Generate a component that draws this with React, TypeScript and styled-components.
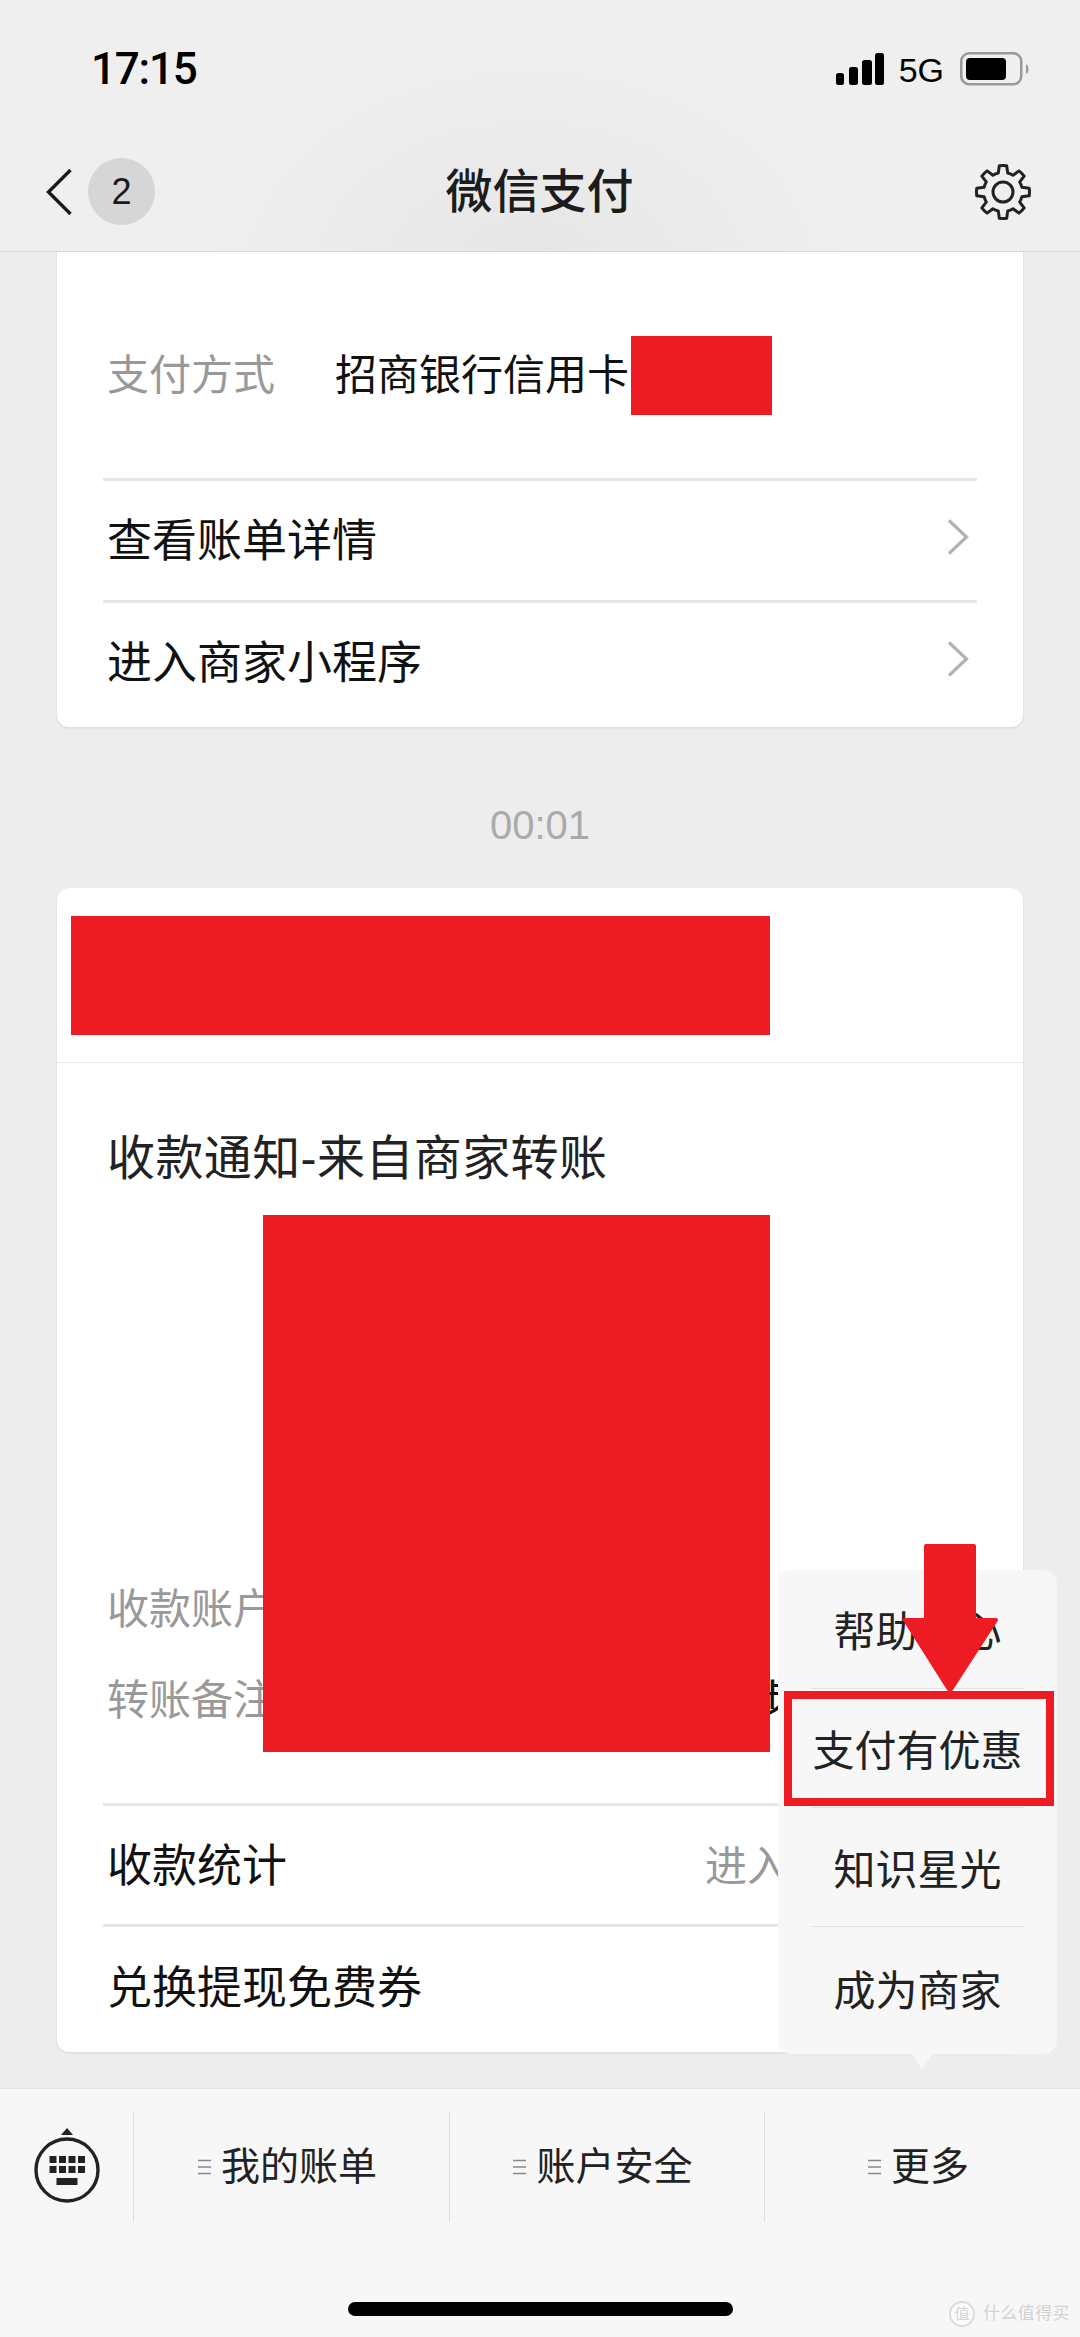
import React from 'react';
import styled, { createGlobalStyle } from 'styled-components';

const RED = '#ed1c24';

const GlobalStyle = createGlobalStyle`
  html, body {
    margin: 0;
    padding: 0;
    background: #ededed;
    font-family: 'Liberation Sans', 'Noto Sans CJK SC', sans-serif;
  }
  * {
    box-sizing: border-box;
  }
`;

const Page = styled.div`
  position: relative;
  display: flex;
  flex-direction: column;
  width: 1080px;
  height: 2337px;
  overflow: hidden;
  background: #ededed;
`;

const Header = styled.header`
  flex: none;
  height: 252px;
  background: radial-gradient(ellipse 330px 230px at 530px 270px, #e6e6e6, #efefef);
  border-bottom: 1px solid #d8d8d8;
`;

const StatusBar = styled.div`
  display: flex;
  align-items: center;
  justify-content: space-between;
  height: 132px;
  padding: 6px 50px 0 91px;
`;

const Clock = styled.span`
  font-family: Roboto, 'Liberation Sans', sans-serif;
  font-size: 44px;
  font-weight: 500;
  letter-spacing: -1.2px;
  color: #000;
`;

const StatusIcons = styled.div`
  display: flex;
  align-items: center;
`;

const NetworkLabel = styled.span`
  margin: 2px 16px 0 15px;
  font-size: 34px;
  line-height: 40px;
  color: #000;
`;

const NavBar = styled.nav`
  display: flex;
  align-items: center;
  justify-content: space-between;
  height: 119px;
  padding: 0 47px 0 46px;
`;

const NavLeft = styled.div`
  display: flex;
  align-items: center;
  gap: 16px;
  width: 150px;
`;

const CountBadge = styled.span`
  display: flex;
  align-items: center;
  justify-content: center;
  width: 67px;
  height: 67px;
  border-radius: 50%;
  background: #d6d6d6;
  font-size: 36px;
  color: #1a1a1a;
`;

const NavTitle = styled.h1`
  margin: 0;
  font-size: 47px;
  font-weight: 500;
  line-height: 60px;
  color: #1c1c1c;
`;

const NavRight = styled.div`
  display: flex;
  justify-content: flex-end;
  width: 150px;
`;

const Feed = styled.main`
  flex: 1;
  min-height: 0;
  padding: 0 57px;
  overflow: hidden;
`;

const Card = styled.section`
  border-radius: 0 0 12px 12px;
  background: #fff;
  box-shadow: 0 1px 3px rgba(0, 0, 0, 0.1);
`;

const RoundCard = styled(Card)`
  position: relative;
  border-radius: 12px;
`;

const PayRow = styled.div`
  display: flex;
  align-items: center;
  padding: 84px 50px 63px;
  font-size: 42px;
  line-height: 50px;
`;

const Muted = styled.span`
  flex: none;
  width: 228px;
  color: #999;
`;

const Value = styled.span`
  color: #111;
`;

const InlineCensor = styled.span`
  flex: none;
  width: 141px;
  height: 79px;
  margin-left: 2px;
  background: ${RED};
`;

const LinkRow = styled.div<{ $height: number; $last?: boolean }>`
  display: flex;
  align-items: center;
  justify-content: space-between;
  height: ${p => p.$height}px;
  margin: 0 46px;
  padding: 3px 8px ${p => (p.$last ? 5 : 0)}px 4px;
  border-top: 3px solid #e6e6e6;
  font-size: 45px;
  line-height: 56px;
  color: #111;

  svg {
    margin-top: -10px;
  }
`;

const RowEnd = styled.span`
  margin-right: 180px;
  font-size: 42px;
  color: #999;
`;

const TimeLabel = styled.div`
  margin: 78px 0 43px;
  font-size: 40px;
  line-height: 40px;
  text-align: center;
  color: #aaa;
`;

const CardTop = styled.div`
  height: 175px;
  padding: 28px 253px 0 14px;
  border-bottom: 1px solid #e9e9e9;
`;

const TopCensor = styled.div`
  height: 119px;
  background: ${RED};
`;

const Details = styled.div`
  display: flex;
  flex-direction: column;
  height: 740px;
  padding: 66px 50px 0;
`;

const NoticeTitle = styled.h2`
  margin: 0 0 391px;
  font-size: 48px;
  font-weight: 400;
  line-height: 60px;
  letter-spacing: 0.4px;
  color: #222;
`;

const InfoRow = styled.div`
  display: flex;
  height: 60px;
  margin-bottom: 31px;
  font-size: 42px;
  line-height: 60px;
`;

const ClippedTail = styled.span`
  margin-left: 416px;
  color: #111;
`;

const BlockCensor = styled.div`
  position: absolute;
  top: 327px;
  left: 206px;
  width: 507px;
  height: 537px;
  background: ${RED};
`;

const BottomBar = styled.footer`
  position: relative;
  flex: none;
  height: 249px;
  padding-top: 22px;
  background: #f7f7f7;
  border-top: 1px solid #e4e4e4;
`;

const MenuRow = styled.div`
  display: grid;
  grid-template-columns: 133px 316px 315px 316px;
  height: 111px;
`;

const KeyboardSlot = styled.div`
  display: flex;
  align-items: flex-start;
  justify-content: center;
  padding-top: 16px;
`;

const MenuItem = styled.div`
  display: flex;
  align-items: center;
  justify-content: center;
  gap: 10px;
  padding-right: 8px;
  border-left: 1px solid #dedede;
  font-size: 39px;
  line-height: 50px;
  color: #222;
`;

const HomeIndicator = styled.div`
  width: 385px;
  height: 14px;
  margin: 80px auto 0 348px;
  border-radius: 7px;
  background: #000;
`;

const Watermark = styled.div`
  position: absolute;
  right: 10px;
  bottom: 10px;
  display: flex;
  align-items: center;
  gap: 8px;
  font-size: 17px;
  line-height: 26px;
  letter-spacing: 0.4px;
  color: #d2d2d2;
`;

const WatermarkSeal = styled.span`
  display: flex;
  align-items: center;
  justify-content: center;
  width: 26px;
  height: 26px;
  border: 2px solid #dcdcdc;
  border-radius: 50%;
  background: #fbfbfb;
  font-size: 15px;
  letter-spacing: 0;
`;

const Popup = styled.div`
  position: absolute;
  top: 1570px;
  left: 778px;
  width: 279px;
  height: 484px;
  border-radius: 14px;
  background: #f7f7f7;

  &::after {
    content: '';
    position: absolute;
    top: 100%;
    left: 134px;
    border-top: 16px solid #f7f7f7;
    border-left: 10px solid transparent;
    border-right: 10px solid transparent;
  }
`;

const PopupItem = styled.div<{ $last?: boolean }>`
  display: flex;
  align-items: center;
  justify-content: center;
  height: ${p => (p.$last ? 127 : 119)}px;
  margin: 0 33px;
  padding-top: ${p => (p.$last ? 2 : 8)}px;
  border-bottom: ${p => (p.$last ? 'none' : '1px solid #e3e3e3')};
  font-size: 42px;
  line-height: 50px;
  white-space: nowrap;
  color: #222;
`;

const HighlightBox = styled.div`
  position: absolute;
  top: 1691px;
  left: 784px;
  width: 270px;
  height: 115px;
  border: 8px solid ${RED};
`;

const ArrowMark = styled.svg`
  position: absolute;
  top: 1544px;
  left: 903px;
`;

const gearPath = () => {
  const cx = 30;
  const cy = 30;
  const pt = (deg: number, r: number) => {
    const a = (deg * Math.PI) / 180;
    return `${(cx + r * Math.cos(a)).toFixed(2)} ${(cy + r * Math.sin(a)).toFixed(2)}`;
  };
  const parts: string[] = [];
  for (let i = 0; i < 8; i++) {
    const a = i * 45 - 90;
    parts.push(`${i === 0 ? 'M' : 'A19.5 19.5 0 0 1'} ${pt(a - 14, 19.5)}`);
    parts.push(`L ${pt(a - 8, 26.5)}`);
    parts.push(`A26.5 26.5 0 0 1 ${pt(a + 8, 26.5)}`);
    parts.push(`L ${pt(a + 14, 19.5)}`);
  }
  parts.push(`A19.5 19.5 0 0 1 ${pt(-104, 19.5)} Z`);
  return parts.join(' ');
};

const GearIcon = () => (
  <svg width='60' height='60' viewBox='0 0 60 60' fill='none' stroke='#222' strokeWidth='3' strokeLinejoin='round'>
    <path d={gearPath()} />
    <circle cx='30' cy='30' r='10' />
  </svg>
);

const SignalIcon = () => (
  <svg width='48' height='32' viewBox='0 0 48 32' fill='#000'>
    <rect x='0' y='20' width='8' height='12' rx='2.5' />
    <rect x='13' y='14' width='9' height='18' rx='2.5' />
    <rect x='26' y='7' width='10' height='25' rx='2.5' />
    <rect x='39' y='0' width='9' height='32' rx='2.5' />
  </svg>
);

const BatteryIcon = () => (
  <svg width='70' height='34' viewBox='0 0 70 34' fill='none'>
    <rect x='1.25' y='1.25' width='60' height='31' rx='8' stroke='#999' strokeWidth='2.5' />
    <rect x='6' y='6' width='40' height='22' rx='4' fill='#000' />
    <path d='M66 12 C69 13 69.5 21 66 22 Z' fill='#999' />
  </svg>
);

const BackIcon = () => (
  <svg width='26' height='46' viewBox='0 0 26 46' fill='none' stroke='#1a1a1a' strokeWidth='3.4'>
    <path d='M24.5 1 L2.5 23 L24.5 45' />
  </svg>
);

const ChevronIcon = () => (
  <svg width='22' height='36' viewBox='0 0 22 36' fill='none' stroke='#b2b2b2' strokeWidth='3.2'>
    <path d='M2 1.5 L19.5 18 L2 34.5' />
  </svg>
);

const MenuLines = () => (
  <svg width='13' height='16' viewBox='0 0 13 16' stroke='#888' strokeWidth='1.6'>
    <path d='M0 1.5 H13 M0 8 H13 M0 14.5 H13' />
  </svg>
);

const KeyboardIcon = () => {
  const keys = [0, 1].flatMap(row =>
    [0, 1, 2, 3].map(col => (
      <rect key={`${row}-${col}`} x={17.5 + col * 9.5} y={29 + row * 10} width='7' height='7' />
    ))
  );
  return (
    <svg width='70' height='76' viewBox='0 0 70 76' fill='#222'>
      <path d='M29 8 L35 1 L41 8 Z' />
      <circle cx='35' cy='43' r='31' fill='none' stroke='#222' strokeWidth='3.4' />
      {keys}
      <rect x='24.5' y='51' width='21' height='7' />
    </svg>
  );
};

const App = () => (
  <Page>
    <GlobalStyle />
    <Header>
      <StatusBar>
        <Clock>17:15</Clock>
        <StatusIcons>
          <SignalIcon />
          <NetworkLabel>5G</NetworkLabel>
          <BatteryIcon />
        </StatusIcons>
      </StatusBar>
      <NavBar>
        <NavLeft>
          <BackIcon />
          <CountBadge>2</CountBadge>
        </NavLeft>
        <NavTitle>微信支付</NavTitle>
        <NavRight>
          <GearIcon />
        </NavRight>
      </NavBar>
    </Header>

    <Feed>
      <Card>
        <PayRow>
          <Muted>支付方式</Muted>
          <Value>招商银行信用卡</Value>
          <InlineCensor />
        </PayRow>
        <LinkRow $height={122}>
          查看账单详情
          <ChevronIcon />
        </LinkRow>
        <LinkRow $height={127} $last>
          进入商家小程序
          <ChevronIcon />
        </LinkRow>
      </Card>

      <TimeLabel>00:01</TimeLabel>

      <RoundCard>
        <CardTop>
          <TopCensor />
        </CardTop>
        <Details>
          <NoticeTitle>收款通知-来自商家转账</NoticeTitle>
          <InfoRow>
            <Muted>收款账户</Muted>
          </InfoRow>
          <InfoRow>
            <Muted>转账备注</Muted>
            <ClippedTail>步</ClippedTail>
          </InfoRow>
        </Details>
        <BlockCensor />
        <LinkRow $height={121}>
          收款统计
          <RowEnd>进入</RowEnd>
        </LinkRow>
        <LinkRow $height={128} $last>
          兑换提现免费券
        </LinkRow>
      </RoundCard>
    </Feed>

    <BottomBar>
      <MenuRow>
        <KeyboardSlot>
          <KeyboardIcon />
        </KeyboardSlot>
        <MenuItem>
          <MenuLines />
          我的账单
        </MenuItem>
        <MenuItem>
          <MenuLines />
          账户安全
        </MenuItem>
        <MenuItem>
          <MenuLines />
          更多
        </MenuItem>
      </MenuRow>
      <HomeIndicator />
      <Watermark>
        <WatermarkSeal>值</WatermarkSeal>
        什么值得买
      </Watermark>
    </BottomBar>

    <Popup>
      <PopupItem>帮助中心</PopupItem>
      <PopupItem>支付有优惠</PopupItem>
      <PopupItem>知识星光</PopupItem>
      <PopupItem $last>成为商家</PopupItem>
    </Popup>
    <HighlightBox />
    <ArrowMark width='95' height='149' viewBox='0 0 95 149' fill={RED} stroke={RED} strokeWidth='4' strokeLinejoin='round'>
      <path d='M23 2 H71 V76 H93 L47 147 L2 76 H23 Z' />
    </ArrowMark>
  </Page>
);

export default App;
